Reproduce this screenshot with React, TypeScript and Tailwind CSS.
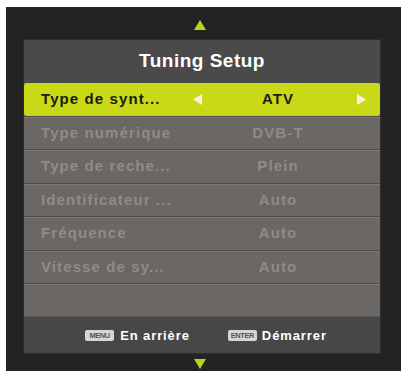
const ROWS = [
  { label: "Type numérique", value: "DVB-T" },
  { label: "Type de reche...", value: "Plein" },
  { label: "Identificateur ...", value: "Auto" },
  { label: "Fréquence", value: "Auto" },
  { label: "Vitesse de sy...", value: "Auto" },
  { label: "", value: "" },
];

function Tri({ dir, className }: { dir: "up" | "down" | "left" | "right"; className?: string }) {
  const pts = {
    up: "0,10 6,0 12,10",
    down: "0,0 12,0 6,10",
    left: "9,0 9,11 0,5.5",
    right: "0,0 0,11 9,5.5",
  }[dir];
  const vb = dir === "up" || dir === "down" ? "0 0 12 10" : "0 0 9 11";
  return (
    <svg viewBox={vb} className={className}>
      <polygon points={pts} fill="currentColor" />
    </svg>
  );
}

function Key({ label }: { label: string }) {
  return (
    <span className="inline-flex items-center justify-center h-[11px] w-[29px] bg-[#d6d6d6] rounded-[2px] text-[7.5px] font-bold leading-none text-[#555] tracking-[-0.4px]">
      {label}
    </span>
  );
}

export default function App() {
  return (
    <div
      className="w-[401px] h-[371px] bg-white pt-[7px] pl-[6px] overflow-hidden"
      style={{ fontFamily: '"Liberation Sans", Arial, sans-serif' }}
    >
      <div className="w-[395px] h-[364px] bg-[#232323] flex flex-col pl-[17px] pr-[20px]">
        <div className="h-[32px] flex justify-center pt-[13px] text-[#bad31d] pr-[4px]">
          <Tri dir="up" className="w-[12px] h-[10px]" />
        </div>

        <div className="flex flex-col border border-[#2e2e2e]">
          <div className="h-[43px] bg-[#4a4a4a] flex items-center justify-center text-white font-bold text-[19px] tracking-[0.5px]">
            Tuning Setup
          </div>

          <div className="bg-[#6a6765]">
            <div className="h-[33px] bg-[#c9d917] rounded-[3px] flex items-center text-[#1b1b16] font-bold text-[15px] tracking-[1.1px]">
              <span className="w-[169px] pl-[17px] whitespace-nowrap">Type de synt...</span>
              <Tri dir="left" className="w-[9px] h-[11px] text-[#f2f2ea]" />
              <span className="w-[152px] text-center">ATV</span>
              <Tri dir="right" className="w-[9px] h-[11px] ml-[3px] text-[#f2f2ea]" />
            </div>
            {ROWS.map((r, i) => (
              <div
                key={i}
                className="h-[33.4px] flex items-center border-t border-t-[#4f4d4c] shadow-[inset_0_1px_0_#7b7876] text-[#8e8b89] font-bold text-[15px] tracking-[1.1px]"
              >
                <span className="w-[169px] pl-[17px] whitespace-nowrap">{r.label}</span>
                <span className="w-[9px]" />
                <span className="w-[152px] text-center">{r.value}</span>
              </div>
            ))}
          </div>

          <div className="h-[37px] bg-[#474747] border-t border-t-[#5a5858] flex items-center justify-center gap-[38px] pl-[8px] text-white font-bold text-[13px] tracking-[0.9px]">
            <span className="flex items-center gap-[6px]">
              <Key label="MENU" />
              En arrière
            </span>
            <span className="flex items-center gap-[5px]">
              <Key label="ENTER" />
              Démarrer
            </span>
          </div>
        </div>

        <div className="flex justify-center pt-[5px] text-[#bad31d] pr-[4px]">
          <Tri dir="down" className="w-[12px] h-[10px]" />
        </div>
      </div>
    </div>
  );
}
